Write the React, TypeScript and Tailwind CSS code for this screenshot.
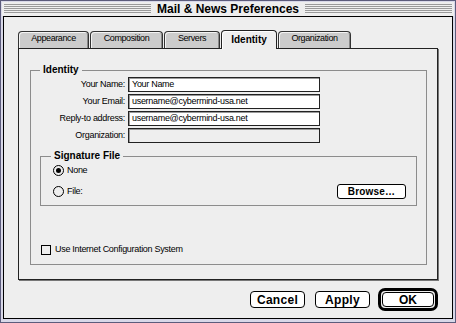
import React from "react";

const sys = "font-['Liberation_Sans',Arial,sans-serif]";

function Tab({ label, width, active }: { label: string; width: string; active?: boolean }) {
	if (active) {
		return (
			<div
				className={`${width} h-[19px] -mb-[1px] relative z-10 bg-[#eeeeee] border border-b-0 border-[#222] rounded-t-[4px] shadow-[inset_1px_1px_0_#ffffff] flex items-center justify-center text-[10px] font-bold pb-[1px]`}
			>
				{label}
			</div>
		);
	}
	return (
		<div
			className={`${width} h-[17px] bg-[#cccccc] border border-b-0 border-[#333] rounded-t-[4px] shadow-[inset_1px_1px_0_#f4f4f4,inset_-1px_0_0_#888888] flex items-center justify-center text-[9px] tracking-[-0.4px] pb-[2px]`}
		>
			{label}
		</div>
	);
}

function Field({ label, value, disabled }: { label: string; value?: string; disabled?: boolean }) {
	return (
		<div className="flex items-center h-[15px]">
			<div className="w-[95px] text-right text-[9px] tracking-[-0.3px] pr-[1px]">{label}</div>
			<div
				className={`ml-[2px] w-[192px] h-[15px] border border-[#222] shadow-[inset_1px_1px_0_#999999] ${disabled ? "bg-[#eeeeee]" : "bg-white"} text-[9px] tracking-[-0.3px] leading-[13px] pl-[3px]`}
			>
				{value}
			</div>
		</div>
	);
}

function Radio({ label, checked }: { label: string; checked?: boolean }) {
	return (
		<div className="flex items-center gap-[3px] h-[11px]">
			<div className="w-[11px] h-[11px] rounded-full border border-black bg-[#eeeeee] flex items-center justify-center">
				{checked && <div className="w-[5px] h-[5px] rounded-full bg-black" />}
			</div>
			<span className="text-[9px] tracking-[-0.3px]">{label}</span>
		</div>
	);
}

function Button({ label, width }: { label: string; width: string }) {
	return (
		<div
			className={`${width} h-[17px] bg-white border border-black rounded-[4px] flex items-center justify-center text-[12px] font-bold tracking-[0.3px]`}
		>
			{label}
		</div>
	);
}

export default function App() {
	return (
		<div className={`${sys} text-black w-[456px] h-[323px] bg-[#d8d8e8] border border-[#5c5c7c] p-[1px] flex flex-col`}>
			{/* title bar */}
			<div className="h-[14px] flex items-center bg-[#eeeeee] px-[2px]">
				<div className="flex-1 h-[10px] bg-[repeating-linear-gradient(to_bottom,#9a9a9a_0px,#9a9a9a_1px,#f0f0f0_1px,#f0f0f0_2px)]" />
				<div className="px-[6px] text-[12px] font-bold leading-[14px]">Mail &amp; News Preferences</div>
				<div className="flex-1 h-[10px] bg-[repeating-linear-gradient(to_bottom,#9a9a9a_0px,#9a9a9a_1px,#f0f0f0_1px,#f0f0f0_2px)]" />
			</div>

			{/* window body */}
			<div className="flex-1 mx-[1px] mb-[2px] border border-black bg-[#eeeeee] flex flex-col pl-[14px] pr-[14px] pt-[13px]">
				<div className="flex items-end gap-[1px]">
					<Tab label="Appearance" width="w-[71px]" />
					<Tab label="Composition" width="w-[73px]" />
					<Tab label="Servers" width="w-[56px]" />
					<Tab label="Identity" width="w-[56px]" active />
					<Tab label="Organization" width="w-[73px]" />
				</div>

				{/* tab panel */}
				<div className="w-[420px] h-[232px] border border-[#222] shadow-[1px_1px_0_#777777] bg-[#eeeeee] pl-[11px] pt-[21px]">
					<div className="relative w-[397px] h-[195px] border border-[#8c8c8c] flex flex-col pt-[6px]">
						<span className="absolute left-[9px] -top-[7px] px-[3px] bg-[#eeeeee] text-[10px] font-bold leading-[12px]">Identity</span>
						<div className="flex flex-col gap-[2px]">
							<Field label="Your Name:" value="Your Name" />
							<Field label="Your Email:" value="username@cybermind-usa.net" />
							<Field label="Reply-to address:" value="username@cybermind-usa.net" />
							<Field label="Organization:" disabled />
						</div>

						{/* signature */}
						<div className="relative ml-[9px] mt-[13px] w-[377px] h-[50px] border border-[#8c8c8c] pl-[12px] pt-[8px] flex flex-col gap-[8px]">
							<span className="absolute left-[10px] -top-[7px] px-[3px] bg-[#eeeeee] text-[10px] font-bold leading-[12px]">Signature File</span>
							<Radio label="None" checked />
							<div className="flex items-center">
								<Radio label="File:" />
								<div className="ml-auto mr-[10px] w-[69px] h-[15px] bg-white border border-black rounded-[3px] flex items-center justify-center text-[10px] font-bold tracking-[0.2px]">
									Browse…
								</div>
							</div>
						</div>

						<div className="mt-[37px] ml-[10px] flex items-center gap-[4px]">
							<div className="w-[10px] h-[10px] border border-black bg-[#eeeeee]" />
							<span className="text-[9px] tracking-[-0.3px]">Use Internet Configuration System</span>
						</div>
					</div>
				</div>

				{/* buttons */}
				<div className="flex items-center justify-end mt-[8px]">
					<Button label="Cancel" width="w-[55px]" />
					<div className="ml-[10px]">
						<Button label="Apply" width="w-[55px]" />
					</div>
					<div className="ml-[8px] w-[60px] h-[23px] border-[3px] border-black rounded-[7px] p-[1px] bg-[#eeeeee] flex">
						<div className="flex-1 bg-white border border-black rounded-[4px] flex items-center justify-center text-[12px] font-bold">OK</div>
					</div>
				</div>
			</div>
		</div>
	);
}
